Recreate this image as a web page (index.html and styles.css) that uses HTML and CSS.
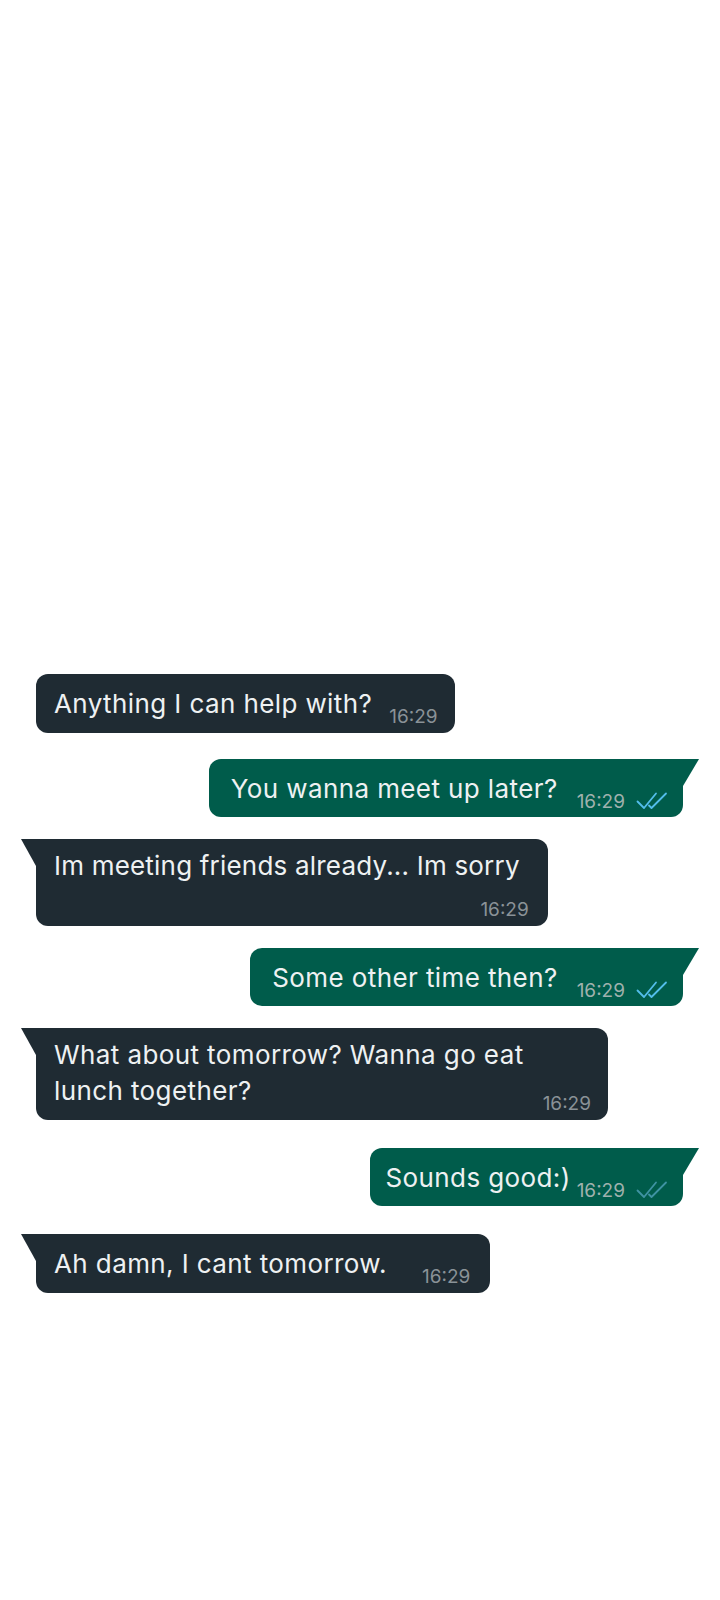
FILE: index.html
```html
<!DOCTYPE html>
<html lang="en">
<head>
<meta charset="utf-8">
<title>Chat</title>
<link rel="stylesheet" href="styles.css">
</head>
<body>
<main class="chat">
  <div class="msg in">
    <div class="bubble">
      <span class="text">Anything I can help with?</span>
      <span class="meta">16:29</span>
    </div>
  </div>

  <div class="msg out gap-md tail">
    <div class="bubble">
      <span class="text">You wanna meet up later?</span>
      <span class="meta">16:29
        <svg class="ticks" viewBox="0 0 32 18" width="32" height="18"><path d="M1.5 9.5 L8 16 L20 1.5 M13 13.5 L15.5 16 L30 1.5"/></svg>
      </span>
    </div>
  </div>

  <div class="msg in tail">
    <div class="bubble stacked">
      <span class="text">Im meeting friends already... Im sorry</span>
      <span class="meta">16:29</span>
    </div>
  </div>

  <div class="msg out tail">
    <div class="bubble">
      <span class="text">Some other time then?</span>
      <span class="meta">16:29
        <svg class="ticks" viewBox="0 0 32 18" width="32" height="18"><path d="M1.5 9.5 L8 16 L20 1.5 M13 13.5 L15.5 16 L30 1.5"/></svg>
      </span>
    </div>
  </div>

  <div class="msg in tail">
    <div class="bubble">
      <span class="text">What about tomorrow? Wanna go eat lunch together?</span>
      <span class="meta">16:29</span>
    </div>
  </div>

  <div class="msg out gap-lg tail">
    <div class="bubble tight">
      <span class="text">Sounds good:)</span>
      <span class="meta">16:29
        <svg class="ticks dim" viewBox="0 0 32 18" width="32" height="18"><path d="M1.5 9.5 L8 16 L20 1.5 M13 13.5 L15.5 16 L30 1.5"/></svg>
      </span>
    </div>
  </div>

  <div class="msg in gap-lg tail">
    <div class="bubble wide">
      <span class="text">Ah damn, I cant tomorrow.</span>
      <span class="meta">16:29</span>
    </div>
  </div>
</main>
</body>
</html>
```

FILE: styles.css
```css
* {
  box-sizing: border-box;
}

html,
body {
  margin: 0;
  padding: 0;
  background: #ffffff;
}

body {
  font-family: Inter, "Noto Sans", "Liberation Sans", sans-serif;
  width: 720px;
  min-height: 1600px;
}

.chat {
  display: flex;
  flex-direction: column;
  padding: 674px 37px 0 36px;
}

.msg {
  display: flex;
  margin-top: 22px;
}

.msg:first-child {
  margin-top: 0;
}

.msg.gap-md {
  margin-top: 26px;
}

.msg.gap-lg {
  margin-top: 28px;
}

.msg.in {
  justify-content: flex-start;
}

.msg.out {
  justify-content: flex-end;
}

.bubble {
  position: relative;
  display: flex;
  align-items: flex-end;
  max-width: 572px;
  padding: 9px 17px 5px 18px;
  border-radius: 12px;
  color: #eef1f2;
  font-size: 26px;
  line-height: 36px;
}

.msg.in .bubble {
  background: #1f2b33;
}

.msg.out .bubble {
  background: #005c4b;
  padding-left: 22px;
  padding-right: 15px;
  padding-bottom: 4px;
}

.text {
  margin-bottom: 6px;
  letter-spacing: 0.4px;
}

.meta {
  flex: none;
  display: flex;
  align-items: center;
  gap: 11px;
  margin-top: 23px;
  margin-left: 17px;
  font-size: 19px;
  line-height: 22px;
  color: #8a9297;
}

.msg.out .meta {
  color: #9fb1ad;
  margin-left: 19px;
}

.ticks {
  display: block;
  fill: none;
  stroke: #53bdeb;
  stroke-width: 1.8;
  stroke-linecap: round;
  stroke-linejoin: round;
  margin-top: -3px;
}

.ticks.dim {
  stroke: #3f93a3;
}

.bubble.stacked {
  flex-direction: column;
  align-items: stretch;
  padding-right: 19px;
}

.bubble.stacked .text {
  margin-right: 9px;
  margin-bottom: 15px;
  letter-spacing: 0.2px;
}

.bubble.stacked .meta {
  align-self: flex-end;
  margin-top: 0;
  margin-left: 0;
}

.msg.out .bubble.tight {
  padding-left: 15px;
}

.msg.out .bubble.tight .meta {
  margin-left: 6px;
}

.bubble.wide {
  padding-right: 20px;
}

.bubble.wide .meta {
  margin-left: 35px;
}

.msg.in.tail .bubble {
  border-top-left-radius: 0;
}

.msg.out.tail .bubble {
  border-top-right-radius: 0;
}

.msg.in.tail .bubble::before {
  content: "";
  position: absolute;
  top: 0;
  left: -15px;
  width: 15px;
  height: 27px;
  background: #1f2b33;
  clip-path: polygon(0 0, 100% 0, 100% 100%);
}

.msg.out.tail .bubble::after {
  content: "";
  position: absolute;
  top: 0;
  right: -16px;
  width: 16px;
  height: 27px;
  background: #005c4b;
  clip-path: polygon(0 0, 100% 0, 0 100%);
}
```
